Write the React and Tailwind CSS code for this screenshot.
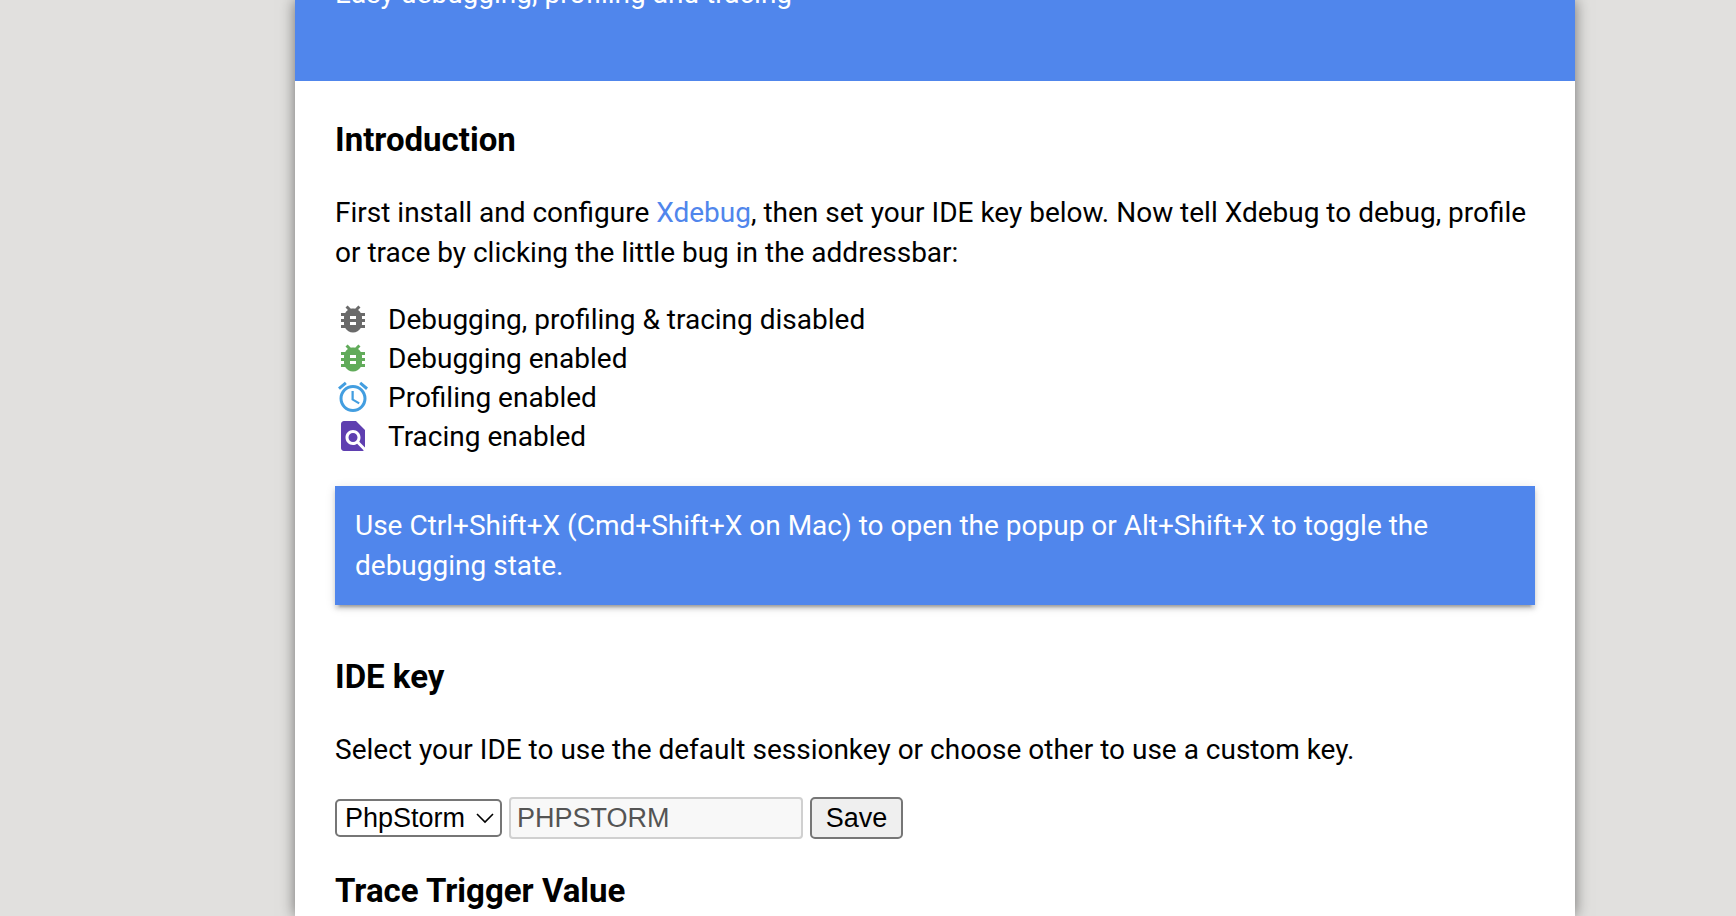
import { MdAccessAlarm, MdBugReport, MdFindInPage } from "react-icons/md";

const states = [
  { icon: MdBugReport, color: "text-[#6a6a6a]", label: "Debugging, profiling & tracing disabled" },
  { icon: MdBugReport, color: "text-[#61ab5a]", label: "Debugging enabled" },
  { icon: MdAccessAlarm, color: "text-[#439ee0]", label: "Profiling enabled" },
  { icon: MdFindInPage, color: "text-[#5f3fb0]", label: "Tracing enabled" },
];

function Heading({ children }) {
  return <h2 className="text-[33px] leading-10 font-bold">{children}</h2>;
}

export default function App() {
  return (
    <div className="min-h-screen overflow-hidden bg-[#e1e0de] pl-[134px] font-['Roboto',sans-serif] text-[28px] leading-10 text-black">
      <div className="mx-auto min-h-screen max-w-[1280px] bg-white shadow-[0_0_14px_rgba(0,0,0,0.5)]">
        <header className="flex h-[81px] items-end overflow-hidden bg-[#5086ec] px-10 pb-[67px] text-white">
          <p>Easy debugging, profiling and tracing</p>
        </header>
        <main className="px-10 pt-[39px]">
          <section>
            <Heading>Introduction</Heading>
            <p className="mt-[33px]">
              First install and configure{" "}
              <a href="https://xdebug.org" className="text-[#5086ec]">Xdebug</a>, then set your IDE key
              below. Now tell Xdebug to debug, profile or trace by clicking the little bug in the
              addressbar:
            </p>
            <ul className="mt-[27px]">
              {states.map(({ icon: Icon, color, label }) => (
                <li key={label} className="flex items-center gap-[17px] leading-[39px]">
                  <Icon className={`mb-px size-9 ${color}`} aria-hidden="true" />
                  {label}
                </li>
              ))}
            </ul>
            <p className="mt-[30px] bg-[#5086ec] px-5 pt-5 pb-[19px] text-white shadow-[0_4px_4px_rgba(0,0,0,0.14),0_6px_2px_-4px_rgba(0,0,0,0.2),0_2px_10px_rgba(0,0,0,0.12)]">
              Use Ctrl+Shift+X (Cmd+Shift+X on Mac) to open the popup or Alt+Shift+X to toggle the
              debugging state.
            </p>
          </section>
          <section className="mt-[52px]">
            <Heading>IDE key</Heading>
            <p className="mt-[33px]">
              Select your IDE to use the default sessionkey or choose other to use a custom key.
            </p>
            <form className="mt-[27px] flex items-center gap-[7px] font-['Liberation_Sans',Arial,sans-serif] text-[27px] leading-8">
              <div className="relative">
                <select
                  aria-label="IDE"
                  defaultValue="PhpStorm"
                  className="block h-[38px] w-[167px] appearance-none rounded-[5px] border-2 border-[#767676] bg-white pl-2"
                >
                  <option>PhpStorm</option>
                  <option>Other</option>
                </select>
                <svg
                  className="pointer-events-none absolute top-3 right-2 h-[14px] w-[18px]"
                  viewBox="0 0 18 14"
                  fill="none"
                  stroke="black"
                  strokeWidth="1.6"
                  aria-hidden="true"
                >
                  <path d="M1 3l8 8 8-8" />
                </svg>
              </div>
              <input
                aria-label="Session key"
                defaultValue="PHPSTORM"
                disabled
                className="h-[42px] w-[294px] rounded-[4px] border-2 border-[#d0d0d0] bg-[#f8f8f8] px-[6px] text-[#545454]"
              />
              <button
                type="button"
                className="h-[42px] w-[93px] rounded-[5px] border-2 border-[#767676] bg-[#efefef]"
              >
                Save
              </button>
            </form>
          </section>
          <section className="mt-8">
            <Heading>Trace Trigger Value</Heading>
          </section>
        </main>
      </div>
    </div>
  );
}
